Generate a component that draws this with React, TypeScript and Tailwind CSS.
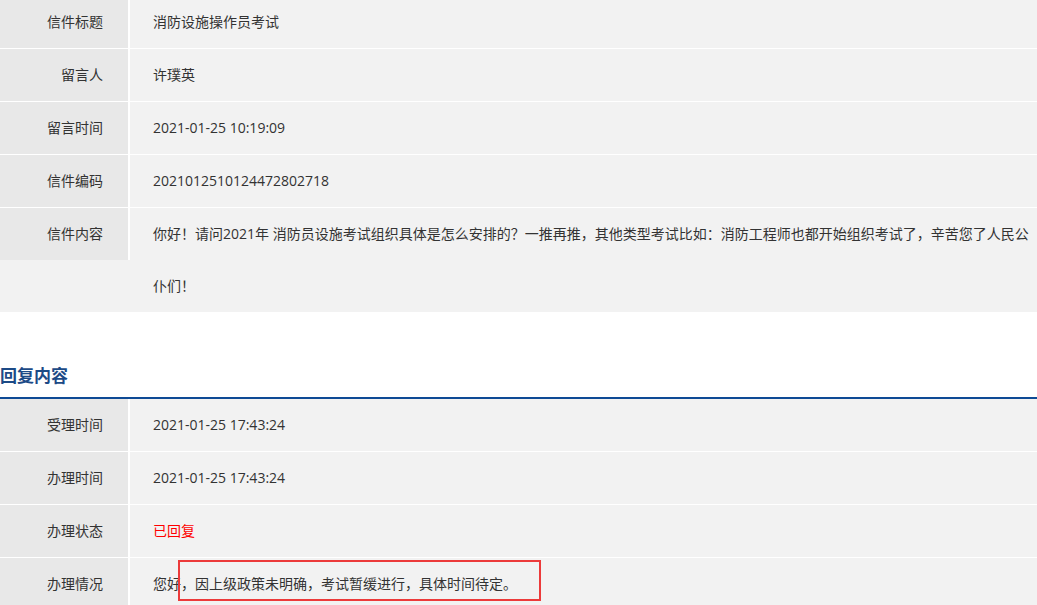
const font = { fontFamily: '"Microsoft YaHei", "Open Sans", "Noto Sans CJK SC", sans-serif' };

interface Row {
  label: string;
  value: React.ReactNode;
}

const letterRows: Row[] = [
  { label: "信件标题", value: "消防设施操作员考试" },
  { label: "留言人", value: "许璞英" },
  { label: "留言时间", value: "2021-01-25 10:19:09" },
  { label: "信件编码", value: "2021012510124472802718" },
];

const replyRows: Row[] = [
  { label: "受理时间", value: "2021-01-25 17:43:24" },
  { label: "办理时间", value: "2021-01-25 17:43:24" },
  { label: "办理状态", value: <span className="text-[#ff0000]">已回复</span> },
  {
    label: "办理情况",
    value: "您好，因上级政策未明确，考试暂缓进行，具体时间待定。",
  },
];

const InfoRow: React.FC<Row & { last?: boolean }> = ({ label, value, last }) => (
  <div className={`flex bg-[#f2f2f2] ${last ? "" : "border-b border-white"}`}>
    <div className="w-[130px] shrink-0 h-[52px] leading-[52px] bg-[#e8e8e8] border-r-2 border-white text-right pr-[25px]">
      {label}
    </div>
    <div className="pl-[23px] leading-[52px]">{value}</div>
  </div>
);

export default function App() {
  return (
    <div
      className="relative w-[1037px] h-[605px] overflow-hidden bg-white text-[14px] text-[#333]"
      style={font}
    >
      <div className="-mt-[4px]">
        {letterRows.map((row) => (
          <InfoRow key={row.label} {...row} />
        ))}

        <div className="flex items-start bg-[#f2f2f2]">
          <div className="w-[130px] shrink-0 h-[52px] leading-[52px] bg-[#e8e8e8] border-r-2 border-white text-right pr-[25px]">
            信件内容
          </div>
          <div className="pl-[23px] leading-[52px] whitespace-nowrap">
            你好！请问2021年 消防员设施考试组织具体是怎么安排的？一推再推，其他类型考试比如：消防工程师也都开始组织考试了，辛苦您了人民公
            <br />
            仆们！
          </div>
        </div>
      </div>

      <div className="mt-[52px]">
        <h2 className="text-[17px] font-bold text-[#1c4a86] leading-[24px] pb-[9px]">
          回复内容
        </h2>
        <div className="h-[2px] bg-[#0e4a95]" />
        {replyRows.map((row, i) => (
          <InfoRow key={row.label} {...row} last={i === replyRows.length - 1} />
        ))}
      </div>

      <div className="absolute left-[178px] top-[560px] w-[363px] h-[41px] border-2 border-[#ec3a3a]" />
    </div>
  );
}
